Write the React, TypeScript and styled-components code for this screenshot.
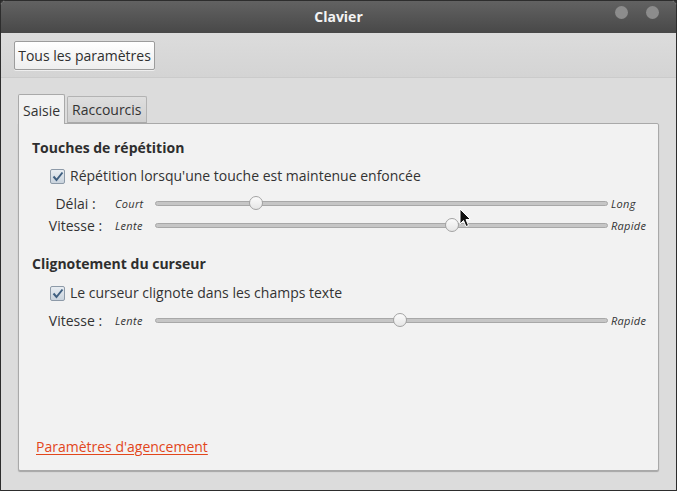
import React from "react";
import styled, { createGlobalStyle } from "styled-components";

const Global = createGlobalStyle`
  html, body { margin: 0; padding: 0; background: #2b2b2b; }
  body { font-family: "Open Sans", "Noto Sans", sans-serif; }
`;

const Window = styled.div`
  position: relative;
  width: 677px;
  height: 491px;
  box-sizing: border-box;
  border: 1px solid #2d2d2d;
  border-radius: 5px 5px 0 0;
  background: #dcdcdc;
  display: flex;
  flex-direction: column;
  overflow: hidden;
`;

const TitleBar = styled.div`
  position: relative;
  height: 32px;
  flex: none;
  background: linear-gradient(#626262, #484848);
  display: flex;
  align-items: center;
  justify-content: center;
`;

const Title = styled.span`
  color: #f4f4f4;
  font-weight: 700;
  font-size: 14px;
  margin-top: -2px;
`;

const Controls = styled.div`
  position: absolute;
  right: 17px;
  top: 5px;
  display: flex;
  gap: 18px;
`;

const Dot = styled.div`
  width: 13px;
  height: 13px;
  border-radius: 50%;
  background: #8c8c8c;
`;

const Toolbar = styled.div`
  height: 45px;
  flex: none;
  box-sizing: border-box;
  padding: 8px 13px 0;
  background: linear-gradient(#dcdcdc, #d4d4d4);
  border-bottom: 1px solid #cbcbcb;
`;

const Button = styled.button`
  height: 29px;
  width: 141px;
  padding: 0;
  font-family: inherit;
  font-size: 14px;
  color: #2f2f2f;
  border: 1px solid #9c9c9c;
  border-radius: 2px;
  background: linear-gradient(#ffffff, #eeeeee);
  box-shadow: 0 1px 0 rgba(255,255,255,0.6);
`;

const Content = styled.div`
  flex: 1;
  display: flex;
  flex-direction: column;
  padding: 16px 17px 19px;
  background: #dcdcdc;
`;

const Tabs = styled.div`
  display: flex;
  align-items: flex-end;
  gap: 2px;
  height: 29px;
`;

const Tab = styled.div<{ $active?: boolean }>`
  box-sizing: border-box;
  height: ${(p) => (p.$active ? "30px" : "27px")};
  padding: 0 4px;
  margin-bottom: ${(p) => (p.$active ? "-1px" : "0")};
  display: flex;
  align-items: center;
  font-size: 14px;
  color: #333;
  border: 1px solid ${(p) => (p.$active ? "#a9a9a9" : "#b3b3b3")};
  border-bottom: ${(p) => (p.$active ? "none" : "1px solid #a9a9a9")};
  border-radius: 2px 2px 0 0;
  background: ${(p) => (p.$active ? "#f2f2f2" : "linear-gradient(#dedede, #d0d0d0)")};
  position: relative;
  z-index: ${(p) => (p.$active ? 1 : 0)};
  padding-top: ${(p) => (p.$active ? "1px" : "0")};
`;

const Panel = styled.div`
  flex: 1;
  display: flex;
  flex-direction: column;
  background: #f2f2f2;
  border: 1px solid #a9a9a9;
  border-radius: 0 2px 2px 2px;
  box-shadow: 0 1px 1px rgba(0,0,0,0.25);
  padding: 15px 13px 14px 13px;
`;

const Heading = styled.div<{ $top?: number }>`
  font-weight: 700;
  font-size: 14px;
  color: #2e2e2e;
  line-height: 18px;
  margin-top: ${(p) => p.$top ?? 0}px;
`;

const CheckRow = styled.label<{ $top: number }>`
  display: flex;
  align-items: center;
  gap: 5px;
  margin: ${(p) => p.$top}px 0 0 18px;
  font-size: 14px;
  color: #333;
  line-height: 18px;
`;

const Box = styled.span`
  width: 13px;
  height: 13px;
  border: 1px solid #8d9aa8;
  border-radius: 2px;
  background: linear-gradient(#e8edf2, #c9d3dd);
  display: flex;
  align-items: center;
  justify-content: center;
`;

const SliderGrid = styled.div<{ $top: number }>`
  display: grid;
  grid-template-columns: 57px 51px 453px auto;
  grid-auto-rows: 22px;
  align-items: center;
  margin: ${(p) => p.$top}px 0 0 15px;
`;

const RowLabel = styled.span`
  font-size: 14px;
  color: #333;
  text-align: center;
`;

const Small = styled.span<{ $right?: boolean }>`
  font-size: 11px;
  font-style: italic;
  color: #333;
  padding-left: ${(p) => (p.$right ? "3px" : "11px")};
  letter-spacing: 0.3px;
`;

const Track = styled.div`
  position: relative;
  height: 5px;
  box-sizing: border-box;
  border: 1px solid #a8a8a8;
  border-radius: 3px;
  background: #c6c6c6;
`;

const Knob = styled.div`
  position: absolute;
  top: 50%;
  width: 12px;
  height: 12px;
  margin: -7px 0 0 -7px;
  border-radius: 50%;
  border: 1px solid #a3a3a3;
  background: linear-gradient(#fbfbfb, #e6e6e6);
`;

const Spacer = styled.div`
  flex: 1;
`;

const Link = styled.a`
  margin-left: 4px;
  font-size: 14px;
  color: #e2461b;
  text-decoration: underline;
  text-underline-offset: 2px;
`;

const Cursor = styled.svg`
  position: absolute;
  left: 458px;
  top: 207px;
`;

function Check() {
  return (
    <Box>
      <svg width="12" height="11" viewBox="0 0 12 11">
        <path d="M1.5 5.5 L4.5 9 L10.5 1.5" fill="none" stroke="#3f5f80" strokeWidth="2" />
      </svg>
    </Box>
  );
}

function Slider({ left, value, right }: { left: string; value: number; right: string }) {
  return (
    <>
      <Small>{left}</Small>
      <Track>
        <Knob style={{ left: `${value * 100}%` }} />
      </Track>
      <Small $right>{right}</Small>
    </>
  );
}

export default function App() {
  return (
    <>
      <Global />
      <Window>
        <TitleBar>
          <Title>Clavier</Title>
          <Controls>
            <Dot />
            <Dot />
          </Controls>
        </TitleBar>
        <Toolbar>
          <Button>Tous les paramètres</Button>
        </Toolbar>
        <Content>
          <Tabs>
            <Tab $active>Saisie</Tab>
            <Tab>Raccourcis</Tab>
          </Tabs>
          <Panel>
            <Heading>Touches de répétition</Heading>
            <CheckRow $top={10}>
              <Check />
              Répétition lorsqu'une touche est maintenue enfoncée
            </CheckRow>
            <SliderGrid $top={7}>
              <RowLabel>Délai :</RowLabel>
              <Slider left="Court" value={0.221} right="Long" />
              <RowLabel>Vitesse :</RowLabel>
              <Slider left="Lente" value={0.657} right="Rapide" />
            </SliderGrid>
            <Heading $top={19}>Clignotement du curseur</Heading>
            <CheckRow $top={11}>
              <Check />
              Le curseur clignote dans les champs texte
            </CheckRow>
            <SliderGrid $top={7}>
              <RowLabel>Vitesse :</RowLabel>
              <Slider left="Lente" value={0.542} right="Rapide" />
            </SliderGrid>
            <Spacer />
            <Link>Paramètres d'agencement</Link>
          </Panel>
        </Content>
        <Cursor width="12" height="20" viewBox="0 0 12 20">
          <path d="M1 1 L1 16 L4.5 12.5 L7 18.5 L9.5 17.5 L7 11.5 L11.5 11.5 Z" fill="#111" stroke="#fff" strokeWidth="1" />
        </Cursor>
      </Window>
    </>
  );
}
